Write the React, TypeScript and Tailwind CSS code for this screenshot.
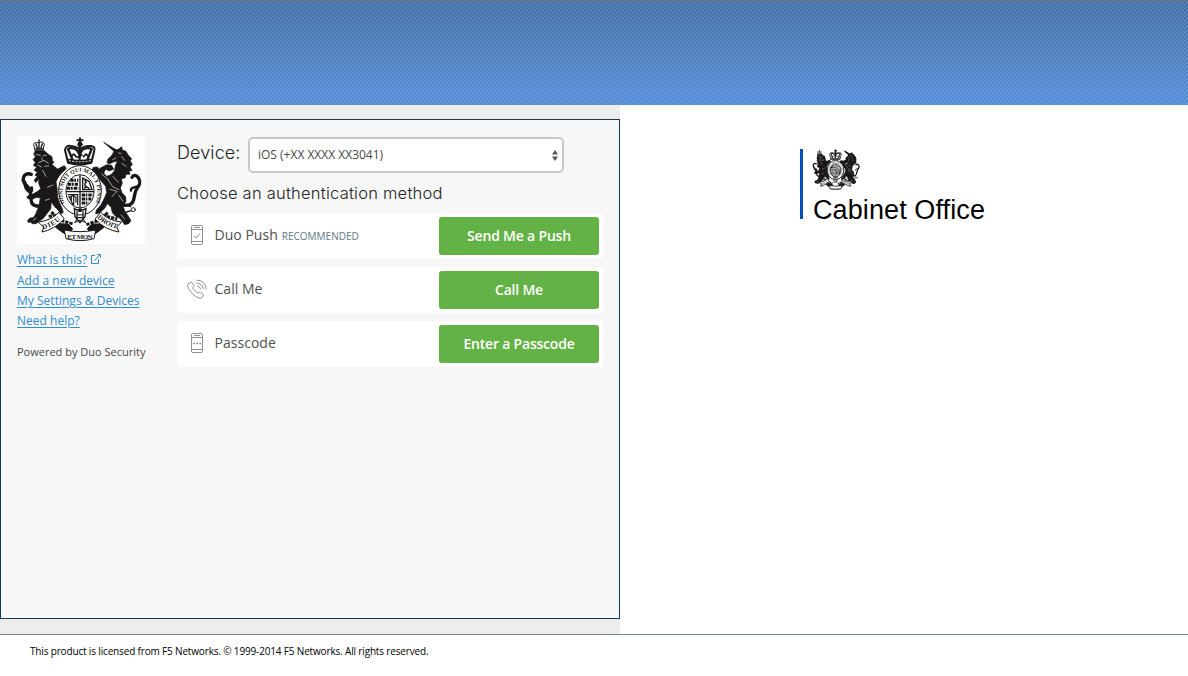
import React from "react";

function Crest({ className, viewBox, bold = false }: { className: string; viewBox: string; bold?: boolean }) {
  return (
    <svg className={className} viewBox={viewBox} fill="none" aria-label="Royal coat of arms">
      <defs>
        <path id="garter" d="M164 220 C147 181 163 127 210 125 C257 127 273 181 256 220" />
        <path id="dieu" d="M99 298 Q134 289 157 264" />
        <path id="droit" d="M261 263 Q288 291 326 297" />
      </defs>
      <g fill="#191718" stroke="#191718" strokeWidth={bold ? 9 : 2} strokeLinejoin="round">
        {/* lion */}
        <path d="M76 62 L103 62 L114 72 L126 80 L127 91 L132 97 L126 103 L131 108 L143 117 L153 112 L163 107 L169 115 L163 122 L154 130 L144 143 L138 155 L141 174 L143 200 L149 220 L156 234 L160 247 L152 253 L145 241 L134 230 L124 216 L122 237 L110 252 L99 266 L88 273 L78 281 L67 281 L61 276 L55 278 L53 271 L60 264 L70 263 L76 254 L83 238 L88 220 L91 204 L80 202 L66 208 L55 207 L50 201 L58 194 L69 192 L83 184 L92 176 L86 160 L87 148 L77 158 L73 150 L82 139 L75 136 L82 126 L72 121 L80 112 L70 106 L76 97 L69 89 L76 80 L71 72Z" />
        {/* unicorn */}
        <path d="M314 61 L326 57 L335 50 L337 60 L348 64 L355 76 L365 86 L361 92 L367 104 L360 110 L366 122 L357 123 L360 133 L348 133 L346 143 L334 147 L337 160 L331 174 L336 188 L347 200 L348 214 L339 229 L345 244 L356 260 L363 272 L356 281 L344 284 L337 274 L328 263 L318 260 L307 248 L303 231 L292 221 L284 235 L270 248 L257 252 L259 240 L272 226 L282 207 L290 188 L287 169 L279 160 L268 146 L256 128 L246 121 L250 112 L262 111 L277 125 L290 139 L303 134 L313 123 L317 104 L323 93 L310 96 L298 102 L291 98 L294 87 L304 78Z" />
        <path d="M281 37 L320 60 L315 67Z" />
        <path d="M270 115 L290 104 L305 106 L311 118 L297 123 L287 117 L281 130 L270 126Z" />
      </g>
      <g stroke="#191718" strokeLinecap="round" strokeLinejoin="round">
        {/* tails */}
        <path strokeWidth="10" d="M88 229 C46 228 75 193 53 170 C29 151 41 124 64 133" />
        <path strokeWidth="9" d="M65 173 C69 200 43 180 45 157" />
        <path strokeWidth="10" d="M343 226 C383 228 366 193 382 174 C402 151 374 124 366 142" />
        <path strokeWidth="7" d="M387 165 C376 175 360 171 363 182" />
        <circle cx="370" cy="239" r="6" strokeWidth="3" />
        <path d="M344 223 L362 230 M349 246 L364 242" strokeWidth="4" />
        {/* lion crown */}
        <path fill="#fff" strokeWidth="3" d="M75 61 L71 43 Q74 34 85 39 Q98 31 103 43 L99 61Z" />
        <path strokeWidth="4" d="M77 57 H99 M87 32 V57 M78 42 L83 56 M97 42 L92 56 M87 30 V34" />
        {/* royal crown */}
        <path fill="#fff" strokeWidth="6" d="M174 98 L165 60 Q167 45 184 48 Q199 49 209 59 Q220 48 238 48 Q257 48 253 61 L244 98 Q209 108 174 98Z" />
        <path strokeWidth="7" strokeDasharray="7 2" d="M174 57 L187 87 M245 57 L233 87 M209 48 V87 M177 55 Q200 51 207 72 M241 55 Q216 51 211 72" />
        <path strokeWidth="5" d="M184 79 L191 72 L198 80 M221 80 L228 72 L235 79 M202 82 L216 75" />
        <path strokeWidth="12" d="M178 92 Q209 99 240 92" />
        <path strokeWidth="6" d="M210 25 V49 M202 31 H218" />
        <circle cx="210" cy="43" r="7" fill="#191718" strokeWidth="2" />
        <path stroke="#fff" strokeWidth="3" strokeDasharray="3 7" d="M178 92 Q209 99 241 92" />
      </g>
      {/* lion and unicorn engraving */}
      <g stroke="#fff" strokeLinecap="round" strokeWidth="1.8">
        <path d="M78 73 L91 76 M99 78 L109 75 M86 98 L102 91 L115 99 M95 84 L97 90 M83 105 L94 111 M104 109 L116 108 M98 121 L108 139 M112 172 L129 165 M106 211 L118 207 M70 271 L79 264" />
        <path d="M326 69 L333 70 M308 89 L318 84 M335 80 L344 91 M336 100 L348 109 M309 139 L325 157 M294 149 L308 170 L327 179 M300 178 L321 184 L306 200 M326 195 L339 214 M333 255 L344 267 M275 132 L295 149" />
      </g>
      {/* foliage beneath the shield */}
      <path stroke="#191718" strokeWidth="9" strokeDasharray="10 3" d="M124 246 L149 270 L189 282 M293 248 L270 270 L229 284 M116 259 L139 257 M278 256 L322 267" />
      {/* garter and quartered shield */}
      <ellipse cx="210" cy="181" rx="64" ry="74" fill="#fff" stroke="#191718" strokeWidth={bold ? 7 : 3} />
      <ellipse cx="210" cy="184" rx="42" ry="50" fill="#fff" stroke="#191718" strokeWidth={bold ? 7 : 3} />
      <text fontFamily="Liberation Serif, serif" fontSize="17" fontWeight="bold" fill="#191718">
        <textPath href="#garter" textLength="248">HONI SOIT QUI MAL Y PENSE</textPath>
      </text>
      <path stroke="#191718" strokeWidth="4" d="M210 136 V233 M168 185 H252" />
      <path stroke="#191718" strokeWidth="9" strokeDasharray="10 2 5 3" d="M181 151 H205 M174 163 H205 M171 175 H205 M215 195 H248 M215 207 H244 M215 219 H236" />
      <path stroke="#191718" strokeWidth="4" d="M218 144 L237 154 L246 179 H218Z M222 175 C237 170 216 162 229 157 L224 150 M223 166 L238 176" />
      <path stroke="#191718" strokeWidth="3.5" d="M173 194 H203 V226 M177 204 Q188 192 198 202 L198 218 M184 197 V218 M191 196 V227 M176 198 L190 226" />
      <path fill="#fff" stroke="#191718" strokeWidth="4" d="M193 236 Q210 247 228 236 L225 260 L210 278 L195 260Z M201 244 V263 H219 V244" />
      <circle cx="210" cy="241" r="6" fill="#191718" />
      <path stroke="#191718" strokeWidth="3" d="M202 264 L194 278 L210 270 L227 278 L218 264" />
      {/* motto ribbon */}
      <g fill="#fff" stroke="#191718" strokeWidth={bold ? 6 : 3} strokeLinejoin="round">
        <path fill="#191718" d="M145 281 L174 282 L188 296 L175 314 L160 309 L137 292Z M274 282 L246 282 L232 296 L244 314 L259 309 L282 292Z" />
        <path d="M84 276 Q121 273 147 247 L163 267 Q132 299 96 306 L101 291Z" />
        <path d="M335 276 Q296 273 272 247 L255 267 Q286 300 327 306 L320 291Z" />
        <path d="M163 300 Q210 310 257 300 L252 326 Q210 338 168 326Z" />
      </g>
      <g fontFamily="Liberation Serif, serif" fontWeight="bold" fill="#191718">
        <text fontSize="21"><textPath href="#dieu" textLength="61">DIEU</textPath></text>
        <text fontSize="21"><textPath href="#droit" textLength="69">DROIT</textPath></text>
        <text x="172" y="326" fontSize="21" textLength="76">ET MON</text>
      </g>
    </svg>
  );
}

function PhoneIcon({ kind }: { kind: "push" | "passcode" }) {
  return (
    <svg className="h-5 w-3.5" viewBox="0 0 14 20" fill="none" stroke="#747474" strokeWidth="0.8">
      <rect x="1.5" y="0.5" width="11" height="19" rx="1.2" />
      <path d="M1.5 4.5H12.5M1.5 16.5H12.5M4 2.5H10" />
      {kind === "push" ? <path d="M4 11L6.2 13L10 8.3" /> : <path strokeWidth="1.5" strokeDasharray="1.5 1.5" d="M3.4 10.4H11" />}
    </svg>
  );
}

function CallIcon() {
  return (
    <svg className="h-5 w-5" viewBox="0 0 20 20" fill="none" stroke="#747474" strokeWidth="0.8" strokeLinecap="round">
      <path d="M1.2 4.7 3.5 3.2Q4.3 2.9 5 3.9L6.8 6.5Q7.1 7.2 6.4 7.9L5.8 8.5Q5.5 9.1 6.4 10.1L10 13.7Q11 14.6 11.7 14L12.4 13.3Q13 12.9 13.8 13.5L16 15.2Q16.8 15.9 16.3 16.7L15 18.5Q13.8 20.1 11.2 18.9C7.4 17.2 3.7 13.2 1.7 9.7Q-.4 6 1.2 4.7Z" />
      <path d="M10.7 7Q13.2 7.8 13.6 10M9.8 4Q15.4 4.5 16.5 10M9.7 1.1Q18 1 19.4 10.2" />
    </svg>
  );
}

const methods = [
  { name: "Duo Push", note: "RECOMMENDED", action: "Send Me a Push", icon: <PhoneIcon kind="push" /> },
  { name: "Call Me", note: "", action: "Call Me", icon: <CallIcon /> },
  { name: "Passcode", note: "", action: "Enter a Passcode", icon: <PhoneIcon kind="passcode" /> },
];

export default function App() {
  return (
    <div className="flex h-[676px] w-[1188px] flex-col overflow-hidden bg-white font-['Open_Sans',sans-serif]">
      <header className="h-[105px] shrink-0 border-t border-[#777777] bg-[repeating-linear-gradient(135deg,rgba(255,255,255,0.15)_0px,rgba(255,255,255,0.15)_1px,transparent_1px,transparent_2.828px),linear-gradient(#3e6da5,#508ad7)]" />
      <main className="flex h-[529px] shrink-0">
        <section className="w-[620px] bg-[#ededed] pt-3.5">
          <div className="flex h-[500px] border border-[#173854] bg-[#f7f7f7] pl-4 pt-4">
            <aside className="w-40 shrink-0">
              <Crest className="h-[108px] w-32 bg-white" viewBox="21 18 384 324" />
              <nav className="flex flex-col items-start pt-[5px] text-xs leading-5 tracking-[0.02px] text-[#318dcc]">
                <a href="#" className="mb-px flex h-[21px] items-center gap-1 whitespace-nowrap">
                  <span className="underline underline-offset-2">What is this?</span>
                  <svg className="mb-px size-[10px]" viewBox="0 0 10 10" fill="none" stroke="currentColor">
                    <path d="M4 1.5H.5v8h7V5M3.5 6.5 9 .9M6 .5h3.5V4" />
                  </svg>
                </a>
                <a href="#" className="whitespace-nowrap underline underline-offset-2">Add a new device</a>
                <a href="#" className="whitespace-nowrap underline underline-offset-2">My Settings &amp; Devices</a>
                <a href="#" className="whitespace-nowrap underline underline-offset-2">Need help?</a>
              </nav>
              <p className="mt-[11px] whitespace-nowrap text-[11px] leading-5 text-[#484848]">Powered by Duo Security</p>
            </aside>
            <div className="w-[426px] pt-px">
              <div className="flex h-9">
                <span className="w-[71px] whitespace-nowrap pt-0.5 font-['Inter',sans-serif] text-[18px] font-light leading-7 tracking-[0.1px] text-[#222222]">Device:</span>
                <button className="flex h-9 w-[316px] items-center justify-between rounded-[5px] border-2 border-[#c8c8c8] bg-white pl-2 pr-1 text-xs text-[#484848]">
                  <span>iOS (+XX XXXX XX3041)</span>
                  <svg className="h-[11px] w-1.5" viewBox="0 0 6 11" fill="#555"><path d="M3 0 6 4.5H0ZM0 6.5H6L3 11Z" /></svg>
                </button>
              </div>
              <h1 className="mt-2 whitespace-nowrap font-['Inter',sans-serif] text-[16.5px] font-light leading-6 tracking-[0.23px] text-[#222222]">Choose an authentication method</h1>
              <div className="mt-2 flex flex-col gap-2">
                {methods.map((method) => (
                  <div key={method.name} className="flex h-[46px] items-center rounded-[3px] bg-white pr-1">
                    <div className="flex w-[37.5px] justify-center pb-[2px] pl-[2.5px]">{method.icon}</div>
                    <div className="flex flex-1 items-baseline gap-1 whitespace-nowrap pb-0.5 text-sm tracking-[0.03px] text-[#505050]">
                      <span>{method.name}</span>
                      <small className="text-[10px] tracking-normal text-[#607888]">{method.note}</small>
                    </div>
                    <button className="h-[38px] w-40 rounded-[3px] bg-[#63b246] text-sm font-semibold tracking-[-0.2px] text-white">{method.action}</button>
                  </div>
                ))}
              </div>
            </div>
          </div>
        </section>
        <aside className="pl-[180px] pt-11">
          <div className="h-[70px] border-l-[3px] border-[#0050bd] pl-[9px]">
            <Crest className="h-[41px] w-12" viewBox="35 20 357 314" bold />
            <p className="whitespace-nowrap pl-px pt-1 font-['Liberation_Sans',sans-serif] text-[27px] leading-8 tracking-[0.1px] text-black">Cabinet Office</p>
          </div>
        </aside>
      </main>
      <footer className="h-[42px] border-t border-[#71808f] pl-[30px] pt-2 font-['Open_Sans',sans-serif] text-[10px] leading-4 tracking-[-0.16px] text-black">
        This product is licensed from F5 Networks. © 1999-2014 F5 Networks. All rights reserved.
      </footer>
    </div>
  );
}
